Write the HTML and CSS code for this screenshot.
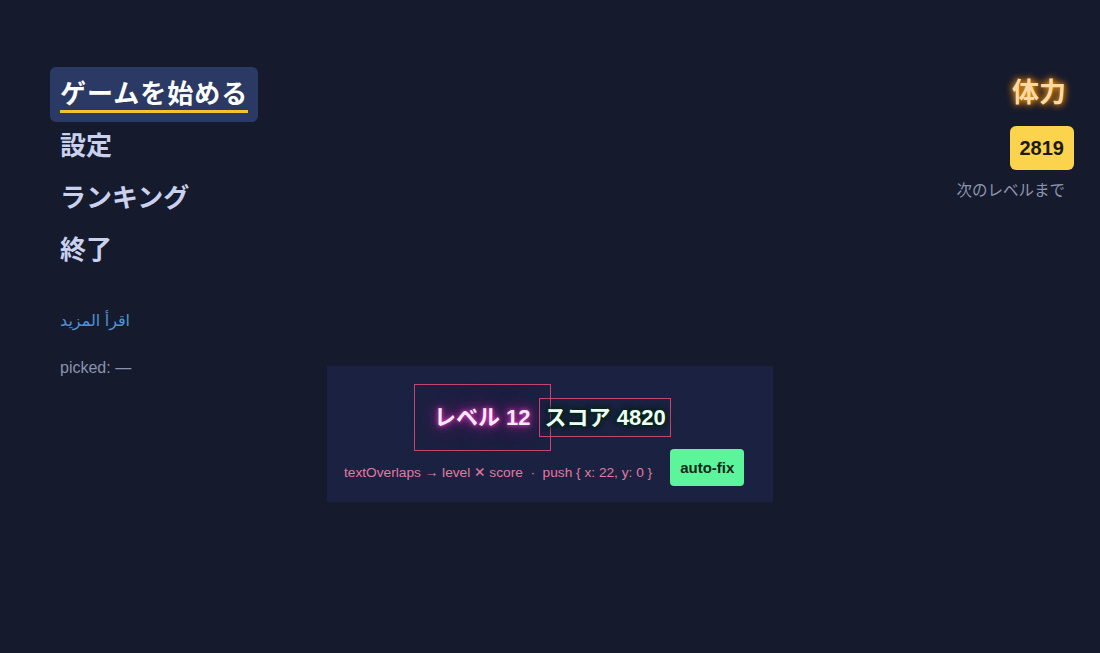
FILE: index.html
```html
<!DOCTYPE html>
<html lang="ja">
<head>
    <meta charset="UTF-8">
    <meta name="viewport" content="width=device-width, initial-scale=1.0">
    <title>メニュー</title>
    <link rel="stylesheet" href="styles.css">
</head>
<body>
    <div class="screen">
        <!-- 左メニュー -->
        <div class="menu-col">
            <ul class="menu">
                <li class="menu-item active"><span class="label">ゲームを始める</span></li>
                <li class="menu-item"><span class="label">設定</span></li>
                <li class="menu-item"><span class="label">ランキング</span></li>
                <li class="menu-item"><span class="label">終了</span></li>
            </ul>
            <a class="more" href="#" dir="rtl" lang="ar">اقرأ المزيد</a>
            <div class="picked">picked: —</div>
        </div>

        <!-- オーバーラップ検出 -->
        <div class="inspector">
            <div class="hud-row">
                <div class="hud-level">レベル 12</div>
                <div class="hud-score">スコア 4820</div>
            </div>
            <div class="report">
                <span class="report-text">textOverlaps → level ✕ score &nbsp;·&nbsp; push { x: 22, y: 0 }</span>
                <button class="fix-btn">auto-fix</button>
            </div>
        </div>

        <!-- 右ステータス -->
        <div class="stats-col">
            <div class="stamina">体力</div>
            <div class="badge">2819</div>
            <div class="next">次のレベルまで</div>
        </div>
    </div>
</body>
</html>
```

FILE: styles.css
```css
html, body{
    margin: 0;
    padding: 0;
    background: #151a2d;
    font-family: "Liberation Sans", "Noto Sans CJK JP", "DejaVu Sans", sans-serif;
}
.screen{
    display: grid;
    grid-template-columns: 1fr 446px 1fr;
    height: 653px;
}
/*menu*/
.menu-col{
    padding: 67px 0 0 50px;
}
.menu{
    list-style: none;
    margin: 0;
    padding: 0;
    display: flex;
    flex-direction: column;
    align-items: flex-start;
}
.menu-item{
    padding: 8px 10px 8px 10px;
    line-height: 39px;
    margin-bottom: -3px;
    font-size: 26px;
    font-weight: bold;
    color: #c9d1ee;
    border-radius: 6px;
}
.menu-item.active{
    background: #2b3965;
    color: #ffffff;
    letter-spacing: 1px;
}
.menu-item.active .label{
    display: inline-block;
    line-height: 31px;
    border-bottom: 3px solid #f2c230;
}
.more{
    display: block;
    margin: 36px 0 0 10px;
    width: max-content;
    font-size: 16px;
    color: #4f92d8;
    text-decoration: none;
}
.picked{
    margin: 29px 0 0 10px;
    font-size: 16px;
    color: #8a92ae;
}
/*inspector*/
.inspector{
    align-self: start;
    margin-top: 366px;
    padding: 18px 20px 16px 17px;
    background: #1b2140;
}
.hud-row{
    display: flex;
    align-items: center;
    padding-left: 70px;
}
.hud-level{
    padding: 20px 19px 19px 19px;
    line-height: 26px;
    border: 1px solid #c2466f;
    font-size: 22px;
    font-weight: bold;
    color: #fbe9ff;
    text-shadow: 0 0 4px #e040c0, 0 0 10px #b82c9e, 0 0 18px #8e2484, 0 0 26px #6a1c6a;
}
.hud-score{
    margin-left: -12px;
    padding: 6px 4px 5px 5px;
    line-height: 26px;
    border: 1px solid #c2466f;
    font-size: 22px;
    font-weight: bold;
    color: #f2fff7;
    text-shadow: 0 0 2px #04291b, 0 0 3px #04291b, 0 0 4px #04291b, 0 0 5px #04291b, 0 0 7px #04291b;
}
.report{
    display: flex;
    align-items: center;
    gap: 18px;
    margin-top: -2px;
    white-space: nowrap;
}
.report-text{
    font-size: 13.7px;
    color: #e07ba1;
    padding-top: 9px;
}
.fix-btn{
    flex-shrink: 0;
    border: none;
    padding: 0 10px;
    height: 37px;
    border-radius: 4px;
    background: #5cf59b;
    color: #10261a;
    font-family: inherit;
    font-size: 15px;
    font-weight: bold;
}
/*stats*/
.stats-col{
    padding: 74px 26px 0 0;
    display: flex;
    flex-direction: column;
    align-items: flex-end;
}
.stamina{
    margin-right: 8px;
    font-size: 27px;
    font-weight: bold;
    line-height: 38px;
    color: #ffd9a3;
    text-shadow: 0 0 6px #f59e0b, 0 0 10px #c2680a;
}
.badge{
    margin-top: 14px;
    padding: 0 10px;
    height: 44px;
    line-height: 44px;
    border-radius: 6px;
    background: #fcd34d;
    color: #1c1a14;
    font-size: 20px;
    font-weight: bold;
}
.next{
    margin: 8px 9px 0 0;
    font-size: 15.5px;
    color: #8d95ae;
}
```
